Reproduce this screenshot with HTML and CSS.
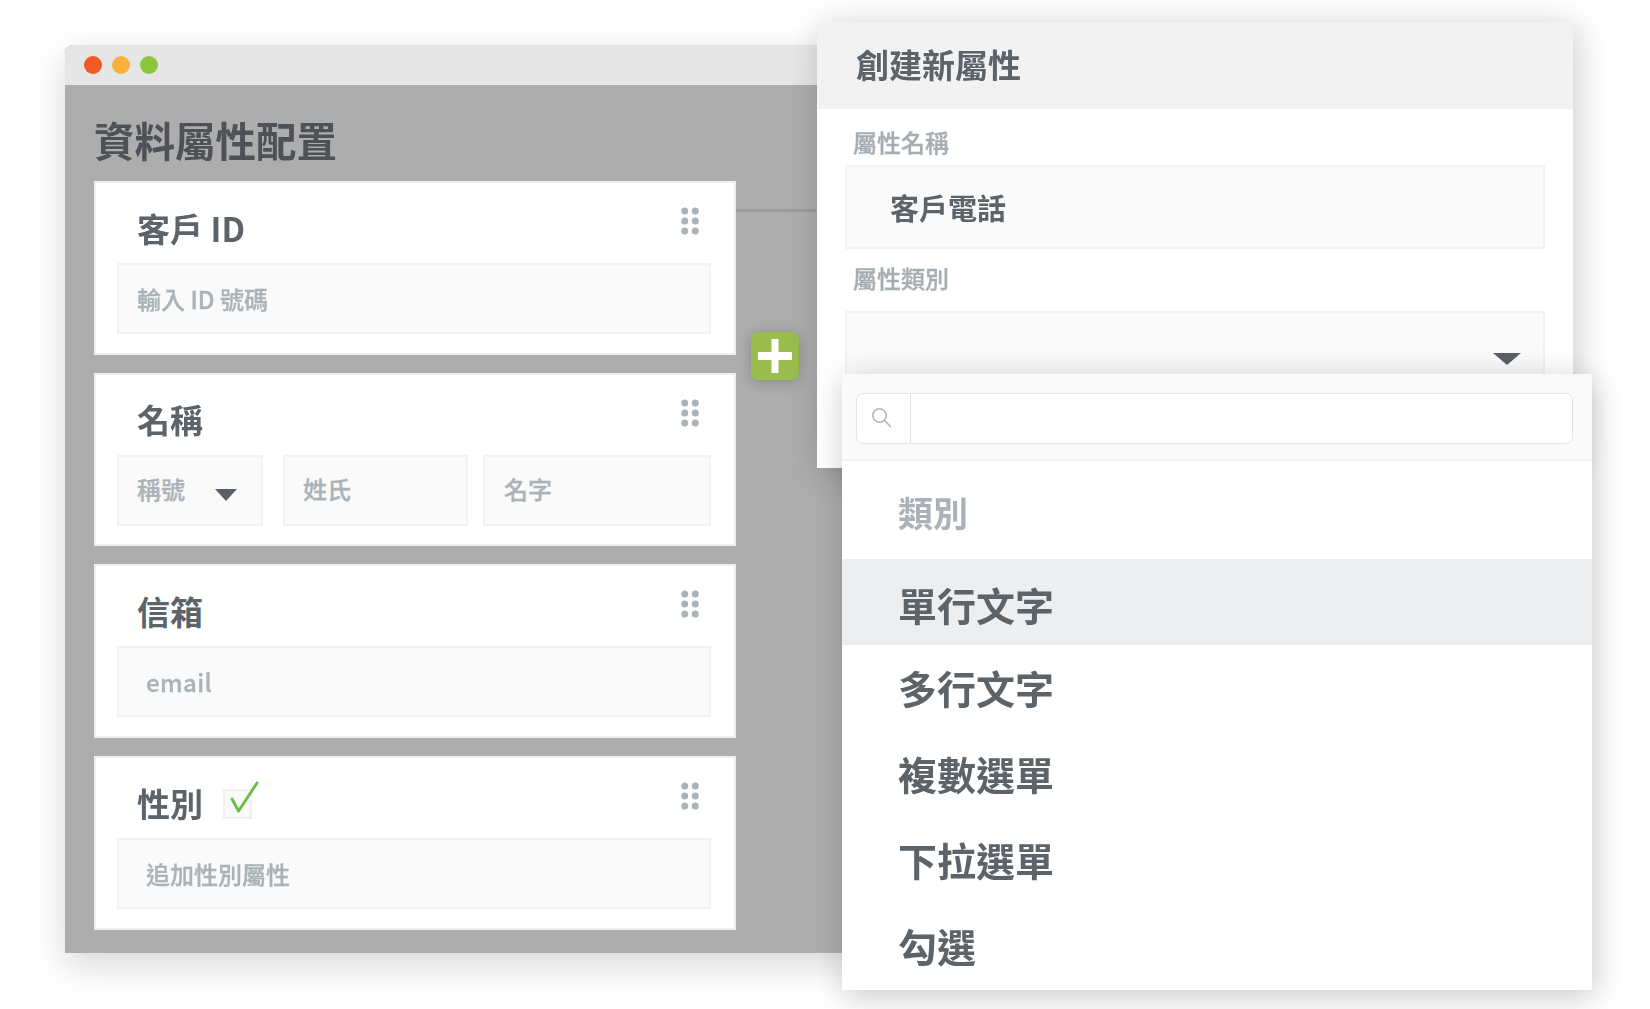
FILE: index.html
```html
<!DOCTYPE html>
<html lang="zh-Hant">
<head>
<meta charset="utf-8">
<title>資料屬性配置</title>
<link rel="stylesheet" href="styles.css">
</head>
<body>
<div class="stage">
  <section class="window">
    <div class="titlebar">
      <span class="dot dot-red"></span>
      <span class="dot dot-amber"></span>
      <span class="dot dot-green"></span>
    </div>
    <div class="window-body">
      <h1 class="page-title">資料屬性配置</h1>
      <div class="cards">
        <article class="card">
          <div class="card-head">
            <h2 class="card-label">客戶 ID</h2>
            <svg class="grip" width="18" height="28" viewBox="0 0 18 28"><circle cx="3.7" cy="4" r="3.5"/><circle cx="14.3" cy="4" r="3.5"/><circle cx="3.7" cy="14" r="3.5"/><circle cx="14.3" cy="14" r="3.5"/><circle cx="3.7" cy="24" r="3.5"/><circle cx="14.3" cy="24" r="3.5"/></svg>
          </div>
          <div class="field field-std">輸入 ID 號碼</div>
        </article>
        <article class="card">
          <div class="card-head">
            <h2 class="card-label">名稱</h2>
            <svg class="grip" width="18" height="28" viewBox="0 0 18 28"><circle cx="3.7" cy="4" r="3.5"/><circle cx="14.3" cy="4" r="3.5"/><circle cx="3.7" cy="14" r="3.5"/><circle cx="14.3" cy="14" r="3.5"/><circle cx="3.7" cy="24" r="3.5"/><circle cx="14.3" cy="24" r="3.5"/></svg>
          </div>
          <div class="name-row">
            <div class="field field-title">稱號<span class="caret caret-small"></span></div>
            <div class="field field-last">姓氏</div>
            <div class="field field-first">名字</div>
          </div>
        </article>
        <article class="card">
          <div class="card-head">
            <h2 class="card-label">信箱</h2>
            <svg class="grip" width="18" height="28" viewBox="0 0 18 28"><circle cx="3.7" cy="4" r="3.5"/><circle cx="14.3" cy="4" r="3.5"/><circle cx="3.7" cy="14" r="3.5"/><circle cx="14.3" cy="14" r="3.5"/><circle cx="3.7" cy="24" r="3.5"/><circle cx="14.3" cy="24" r="3.5"/></svg>
          </div>
          <div class="field field-wide field-email">email</div>
        </article>
        <article class="card">
          <div class="card-head">
            <h2 class="card-label">性別</h2>
            <span class="checkbox">
              <svg class="check" width="30" height="40" viewBox="0 0 30 40"><path d="M1 17 L7.6 29 L26 1"/></svg>
            </span>
            <svg class="grip" width="18" height="28" viewBox="0 0 18 28"><circle cx="3.7" cy="4" r="3.5"/><circle cx="14.3" cy="4" r="3.5"/><circle cx="3.7" cy="14" r="3.5"/><circle cx="14.3" cy="14" r="3.5"/><circle cx="3.7" cy="24" r="3.5"/><circle cx="14.3" cy="24" r="3.5"/></svg>
          </div>
          <div class="field field-wide">追加性別屬性</div>
        </article>
      </div>
    </div>
  </section>

  <div class="connector"></div>
  <div class="add-button">
    <svg width="34" height="34" viewBox="0 0 34 34"><rect x="0" y="13" width="34" height="8"/><rect x="13.5" y="0" width="7" height="34"/></svg>
  </div>

  <section class="panel">
    <header class="panel-head"><span class="panel-title">創建新屬性</span></header>
    <div class="panel-body">
      <div class="panel-label panel-label-first">屬性名稱</div>
      <div class="field panel-input">客戶電話</div>
      <div class="panel-label panel-label-second">屬性類別</div>
      <div class="field panel-select"><span class="caret caret-large"></span></div>
    </div>
  </section>

  <section class="dropdown">
    <div class="search-area">
      <div class="search-box">
        <span class="search-icon">
          <svg width="24" height="24" viewBox="0 0 24 24"><circle cx="9.5" cy="9.5" r="6.7"/><path d="M14.5 14.5 L21 21"/></svg>
        </span>
      </div>
    </div>
    <div class="option-group">類別</div>
    <ul class="options">
      <li class="option option-active">單行文字</li>
      <li class="option">多行文字</li>
      <li class="option">複數選單</li>
      <li class="option">下拉選單</li>
      <li class="option">勾選</li>
    </ul>
  </section>
</div>
</body>
</html>
```

FILE: styles.css
```css
* { box-sizing: border-box; }

html, body {
  margin: 0;
  padding: 0;
  background: #fff;
}

body {
  font-family: "Noto Sans CJK TC", "Noto Sans", "Liberation Sans", sans-serif;
  overflow: hidden;
}

.stage {
  position: relative;
  width: 1650px;
  height: 1009px;
  overflow: hidden;
  filter: blur(0.5px);
}

/* left window */
.window {
  position: absolute;
  left: 65px;
  top: 45px;
  width: 790px;
  height: 908px;
  background: #adadad;
  border-radius: 8px 8px 0 0;
  box-shadow: 0 12px 36px rgba(0, 0, 0, 0.16);
}

.titlebar {
  display: flex;
  align-items: center;
  gap: 10px;
  height: 40px;
  padding-left: 19px;
  background: #e6e6e6;
  border-radius: 8px 8px 0 0;
}

.dot {
  width: 18px;
  height: 18px;
  border-radius: 50%;
}
.dot-red { background: #f15a24; }
.dot-amber { background: #fbb03b; }
.dot-green { background: #8cc63f; }

.window-body {
  padding: 31px 0 0 29px;
}

.page-title {
  margin: 0 0 17px;
  font-size: 40.5px;
  line-height: 48px;
  font-weight: 700;
  color: #4e5256;
}

.cards {
  display: flex;
  flex-direction: column;
  gap: 18px;
  width: 642px;
}

.card {
  height: 173.7px;
  padding: 0 23px 0 21px;
  background: #fff;
  border: 2px solid #eeeeee;
}

.card-head {
  display: flex;
  align-items: center;
  height: 80px;
  padding: 12px 0 0 20px;
}

.card-label {
  margin: 0 0 2px;
  font-size: 33px;
  line-height: 1;
  font-weight: 700;
  color: #5c6369;
}

.grip {
  align-self: flex-start;
  margin: 12px 12px 0 auto;
  fill: #a9b4ba;
}

.checkbox {
  position: relative;
  width: 29px;
  height: 30px;
  margin-left: 20px;
  background: #fafafa;
  border: 2px solid #f0f0f0;
}

.check {
  position: absolute;
  left: 6px;
  top: -9px;
  overflow: visible;
  fill: none;
  stroke: #6cbd45;
  stroke-width: 3px;
  stroke-linecap: round;
  stroke-linejoin: round;
}

/* inputs */
.field {
  display: flex;
  align-items: center;
  height: 71px;
  background: #fafafa;
  border: 2px solid #f2f2f2;
  font-size: 24px;
  font-weight: 500;
  color: #aab3b8;
  -webkit-text-stroke: 0.35px #aab3b8;
}

.field-std { padding-left: 18px; }
.field-wide { padding-left: 27px; }
.field-email { letter-spacing: 0.4px; }

.name-row {
  display: flex;
}

.field-title {
  width: 146px;
  margin-right: 20px;
  padding: 0 0 3px 18px;
}

.field-last {
  width: 185px;
  margin-right: 15px;
  padding: 0 0 3px 18px;
}

.field-first {
  width: 228px;
  padding: 0 0 3px 19px;
}

.caret {
  display: block;
  width: 0;
  height: 0;
  border-style: solid;
  border-color: #5c6066 transparent transparent;
}

.caret-small {
  margin: 13px 0 0 30px;
  border-width: 12px 11px 0;
}

.caret-large {
  border-width: 12px 14px 0;
}

/* connector and add button */
.connector {
  position: absolute;
  left: 736px;
  top: 209px;
  width: 80px;
  height: 3px;
  background: #9c9c9c;
}

.add-button {
  position: absolute;
  left: 751px;
  top: 332px;
  display: flex;
  align-items: center;
  justify-content: center;
  width: 48px;
  height: 48px;
  background: #9bbd4e;
  border-radius: 7px;
  box-shadow: 0 2px 14px rgba(0, 0, 0, 0.22);
  fill: #fff;
}

/* create panel */
.panel {
  position: absolute;
  left: 817px;
  top: 22px;
  width: 756px;
  height: 446px;
  background: #fff;
  box-shadow: 4px 4px 32px rgba(0, 0, 0, 0.2);
}

.panel-head {
  display: flex;
  align-items: center;
  height: 87px;
  padding: 0 0 4px 39px;
  background: #f2f2f2;
  font-size: 33px;
  font-weight: 700;
  color: #5c6369;
}

.panel-body {
  padding: 0 28px 0 28px;
}

.panel-label {
  font-size: 24px;
  line-height: 34px;
  font-weight: 500;
  color: #a6aeb3;
  -webkit-text-stroke: 0.35px #a6aeb3;
  padding-left: 8px;
}

.panel-label-first { padding-top: 16px; padding-bottom: 6px; }
.panel-label-second { padding-top: 12px; padding-bottom: 16px; }

.panel-input {
  height: 84px;
  padding-left: 43px;
  font-size: 29px;
  font-weight: 700;
  color: #5c6369;
  -webkit-text-stroke: 0;
}

.panel-select {
  align-items: flex-start;
  justify-content: flex-end;
  height: 100px;
  padding: 40px 22px 0 0;
}

/* dropdown */
.dropdown {
  position: absolute;
  left: 842px;
  top: 374px;
  width: 750px;
  height: 616px;
  background: #fff;
  box-shadow: 2px 6px 30px rgba(0, 0, 0, 0.22);
}

.search-area {
  height: 87px;
  padding: 19px 19px 0 14px;
  background: #fafafa;
  border-bottom: 2px solid #f2f2f2;
}

.search-box {
  height: 51px;
  background: #fff;
  border: 1.5px solid #e4e4e4;
  border-radius: 7px;
}

.search-icon {
  display: flex;
  align-items: center;
  justify-content: center;
  width: 54px;
  height: 100%;
  border-right: 1.5px solid #e0e0e0;
  padding: 0 3px 2px 0;
}

.search-icon svg {
  fill: none;
  stroke: #b5b5b5;
  stroke-width: 1.6px;
}

.option-group {
  display: flex;
  align-items: center;
  height: 98px;
  padding: 2px 0 0 56px;
  font-size: 35px;
  font-weight: 700;
  color: #aab1b7;
}

.options {
  margin: 0;
  padding: 0;
  list-style: none;
}

.option {
  display: flex;
  align-items: center;
  height: 86px;
  padding: 0 0 2px 56px;
  font-size: 39px;
  font-weight: 700;
  color: #5c6369;
}

.option-active {
  padding: 4px 0 0 56px;
  background: #eceef0;
}
```
